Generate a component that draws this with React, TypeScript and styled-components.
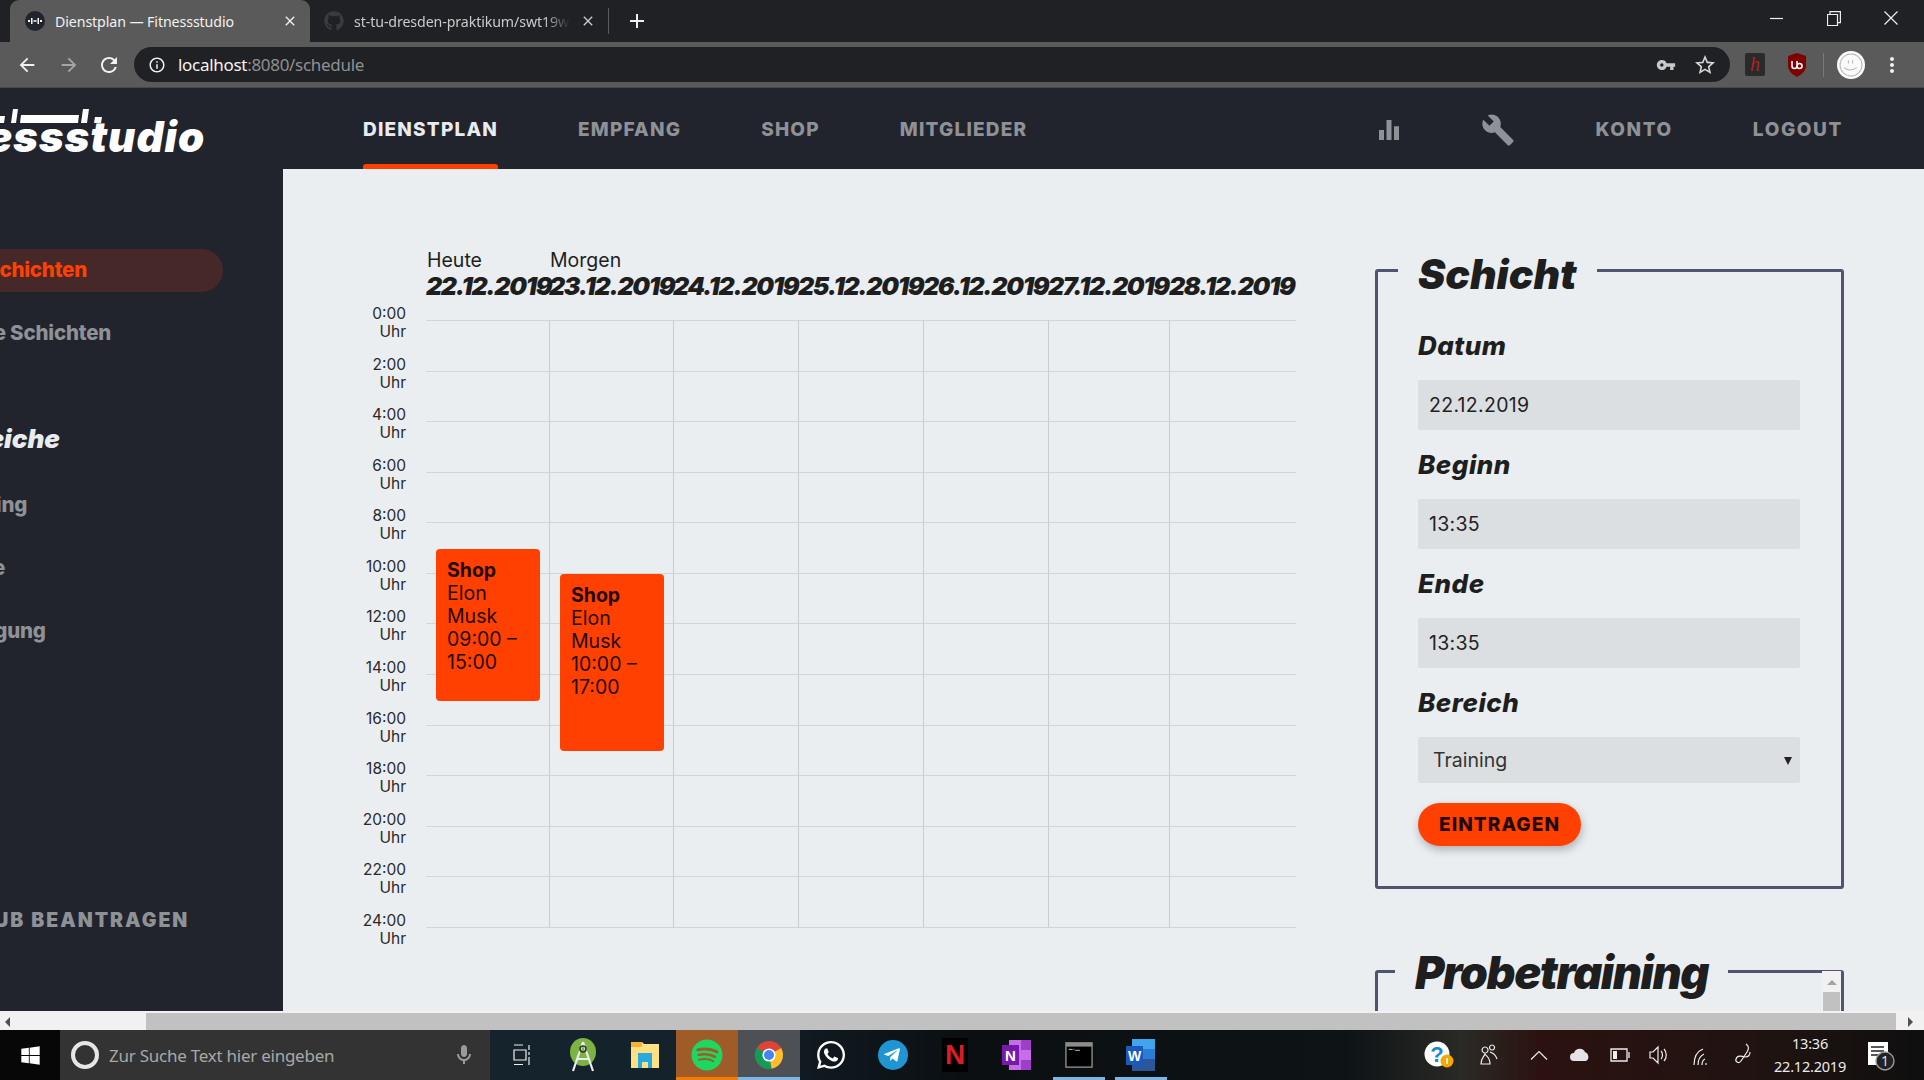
import React from 'react';
import styled, { createGlobalStyle } from 'styled-components';
import { FaGithub, FaWhatsapp, FaTelegramPlane, FaSpotify, FaWindows } from 'react-icons/fa';
import { MdBuild, MdEqualizer, MdVpnKey, MdOutlineStarBorder, MdArrowBack, MdArrowForward, MdRefresh, MdInfoOutline, MdClose, MdAdd, MdMoreVert, MdOutlineMic } from 'react-icons/md';

const HEAD = `Inter, "Liberation Sans", sans-serif`;
const BODY = `Inter, "Open Sans", "Liberation Sans", sans-serif`;
const UI = `"Noto Sans", "Open Sans", sans-serif`;
const ORANGE = '#ff4000';
const DARK = '#21242d';

const GlobalStyle = createGlobalStyle`
  html, body { margin: 0; padding: 0; height: 100%; overflow: hidden; background: ${DARK}; }
  * { box-sizing: border-box; }
`;

const Screen = styled.div`
  width: 1924px;
  height: 1080px;
  display: flex;
  flex-direction: column;
  overflow: hidden;
`;

/* browser */
const TabBar = styled.div`
  height: 42px;
  background: #202124;
  display: flex;
  align-items: flex-end;
  padding-left: 10px;
  flex: none;
  font-family: ${UI};
`;
const Tab = styled.div<{ $active?: boolean }>`
  width: ${p => (p.$active ? 300 : 298)}px;
  height: 42px;
  padding: 0 12px 0 ${p => (p.$active ? 15 : 14)}px;
  border-radius: 9px 9px 0 0;
  background: ${p => (p.$active ? '#5a5a5a' : 'transparent')};
  display: flex;
  align-items: center;
  gap: 10px;
  color: ${p => (p.$active ? '#f1f1f1' : '#c9cacc')};
`;
const TabTitle = styled.span<{ $fade?: boolean }>`
  flex: 1;
  font-size: 14.2px;
  white-space: nowrap;
  overflow: hidden;
  letter-spacing: -0.1px;
  ${p => p.$fade && 'mask-image: linear-gradient(90deg, #000 88%, transparent 100%);'}
`;
const TabDivider = styled.div`
  width: 1px;
  height: 26px;
  margin: 0 0 8px 0;
  background: #5a5b5e;
`;
const NewTab = styled.div`
  display: flex;
  width: 56px;
  height: 42px;
  align-items: center;
  justify-content: center;
  color: #eee;
`;
const WindowButtons = styled.div`
  margin-left: auto;
  margin-right: 5px;
  display: flex;
  height: 42px;
  align-self: flex-start;
`;
const WindowButton = styled.div`
  width: 57px;
  height: 36px;
  display: flex;
  align-items: center;
  justify-content: center;
`;
const Toolbar = styled.div`
  height: 46px;
  flex: none;
  background: #5a5a5a;
  border-bottom: 1px solid #47474a;
  display: flex;
  padding: 5px 0 0 4px;
  align-items: flex-start;
  color: #f1f1f1;
`;
const ToolButton = styled.div<{ $w?: number; $dim?: boolean }>`
  width: ${p => p.$w ?? 40}px;
  height: 35px;
  display: flex;
  align-items: center;
  justify-content: center;
  flex: none;
  color: ${p => (p.$dim ? '#a5a5a5' : '#f1f1f1')};
`;
const Omnibox = styled.div`
  width: 1596px;
  height: 35px;
  margin-left: 5px;
  border-radius: 18px;
  background: #202124;
  display: flex;
  align-items: center;
  padding: 0 8px 0 14px;
  font-family: ${UI};
  font-size: 17px;
  letter-spacing: -0.3px;
`;
const Url = styled.span`
  margin-left: 12px;
  flex: 1;
  color: #8f9092;
  span { color: #f3f3f3; }
`;
const ExtensionSlot = styled(ToolButton)`
  margin-left: 2px;
`;
const ExtDivider = styled.div`
  width: 1px;
  height: 24px;
  margin: 6px 13px 0 7px;
  background: #79797b;
`;
const ExtH = styled.div`
  width: 20px;
  height: 23px;
  background: #2a2a2b;
  border-radius: 2px;
  color: #b3211c;
  font: italic 20px/22px "Liberation Serif", serif;
  text-align: center;
`;
const Avatar = styled.div`
  width: 28px;
  height: 28px;
  margin-top: 4px;
  border-radius: 50%;
  background: #fbfbfb;
  display: flex;
  align-items: center;
  justify-content: center;
`;

/* app */
const AppFrame = styled.div`
  height: 923px;
  flex: none;
  background: ${DARK};
  display: flex;
  flex-direction: column;
  overflow: hidden;
`;
const Header = styled.header`
  height: 81px;
  flex: none;
  display: flex;
  align-items: stretch;
`;
const LogoArea = styled.div`
  width: 283px;
  flex: none;
  overflow: hidden;
  padding-top: 20px;
`;
const Logo = styled.div`
  margin-left: -98px;
  color: #fff;
  font: italic 900 42px/34px ${HEAD};
  letter-spacing: 1px;
  white-space: nowrap;
  svg { display: block; margin: 0 0 -4px 98px; }
`;
const Nav = styled.nav`
  flex: 1;
  display: flex;
  align-items: stretch;
  gap: 80px;
  padding: 0 81px 0 80px;
`;
const NavItem = styled.a<{ $active?: boolean; $push?: boolean; $ls?: number }>`
  position: relative;
  display: flex;
  align-items: center;
  font: 800 19px/1 ${HEAD};
  letter-spacing: ${p => p.$ls ?? 1.2}px;
  color: ${p => (p.$active ? '#e9ecef' : '#8e9196')};
  margin-left: ${p => (p.$push ? 'auto' : 0)};
  padding-top: 2px;
  ${p => p.$active && `
    &::after {
      content: '';
      position: absolute;
      left: 0;
      right: 0;
      bottom: 0;
      height: 5px;
      background: ${ORANGE};
      border-radius: 3px 3px 0 0;
    }
  `}
`;
const StatsItem = styled(NavItem)`
  margin-right: -3px;
`;
const Body = styled.div`
  flex: 1;
  display: flex;
  min-height: 0;
`;
const Sidebar = styled.aside`
  width: 283px;
  flex: none;
  overflow: hidden;
  padding-top: 80px;
  display: flex;
  flex-direction: column;
`;
const SideLink = styled.a<{ $active?: boolean; $top?: number; $left: number }>`
  display: block;
  height: 43px;
  width: 360px;
  margin-left: ${p => p.$left}px;
  margin-top: ${p => p.$top ?? 0}px;
  color: ${p => (p.$active ? ORANGE : '#8e9196')};
  font: 800 20.5px/42px ${HEAD};
  letter-spacing: -0.2px;
  white-space: nowrap;
`;
const ActivePill = styled(SideLink)`
  width: 303px;
  border-radius: 0 22px 22px 0;
  background: #462829;
`;
const SideHeading = styled.h3`
  margin: 62px 0 0 -55px;
  height: 43px;
  color: #e9ecef;
  font: italic 900 26px/43px ${HEAD};
  white-space: nowrap;
`;
const SideAction = styled.a`
  margin: auto 0 79px -67px;
  color: #8e9196;
  font: 900 19.5px/24px ${HEAD};
  letter-spacing: 2px;
  white-space: nowrap;
`;
const Main = styled.main`
  flex: 1;
  min-width: 0;
  background: #eaeef1;
  display: flex;
  align-items: flex-start;
  overflow: hidden;
`;
const Schedule = styled.section`
  width: 1092px;
  flex: none;
  padding: 79px 0 0 143px;
`;
const DayHeadRow = styled.div`
  display: grid;
  grid-template-columns: 123px 124px 125px 125px 125px 121px 127px;
  height: 72px;
`;
const DayHead = styled.div`
  white-space: nowrap;
  color: #1e1e1e;
`;
const DayHint = styled.div`
  height: 23px;
  padding-left: 1px;
  font: 400 19.5px/24px ${BODY};
`;
const DayDate = styled.div`
  font: italic 900 25px/30px ${HEAD};
  letter-spacing: -1.3px;
`;
const ScheduleBody = styled.div`
  display: flex;
  margin-left: -143px;
`;
const TimeColumn = styled.div`
  width: 123px;
  flex: none;
  margin-top: -15px;
  text-align: right;
  color: #2a2a2a;
  font: 400 15.5px/18px ${BODY};
`;
const TimeLabel = styled.div`
  height: 50.58px;
  white-space: pre-line;
`;
const GridWrap = styled.div`
  position: relative;
  margin-left: 20px;
  width: 870px;
`;
const GridTable = styled.div`
  display: grid;
  grid-template-columns: 123px 124px 125px 125px 125px 121px 127px;
  grid-auto-rows: 50.58px;
  border-bottom: 1px solid #d2d6d9;
`;
const GridCell = styled.div<{ $first: boolean }>`
  border-top: 1px solid #d2d6d9;
  border-left: ${p => (p.$first ? 'none' : '1px solid #c9cdd0')};
`;
const EventCard = styled.div<{ $x: number; $y: number; $h: number }>`
  position: absolute;
  left: ${p => p.$x}px;
  top: ${p => p.$y}px;
  width: 104px;
  height: ${p => p.$h}px;
  background: ${ORANGE};
  border-radius: 4px;
  padding: 10px 11px;
  color: #1f0a02;
  font: 400 19.5px/23px ${BODY};
  b { font-weight: 700; display: block; }
`;
const Panel = styled.aside`
  width: 469px;
  flex: none;
  padding-top: 70px;
`;
const Box = styled.fieldset<{ $h?: number }>`
  position: relative;
  margin: 0;
  padding: 0 40px;
  border: 3px solid #4f5570;
  border-radius: 3px;
  min-width: 0;
  ${p => p.$h && `height: ${p.$h}px;`}
`;
const Legend = styled.legend<{ $size: number; $ml: number; $ls?: number; $drop: number }>`
  margin-left: ${p => p.$ml}px;
  padding: ${p => p.$drop}px 20px 0;
  color: #1e1e1e;
  font: italic 900 ${p => p.$size}px/56px ${HEAD};
  letter-spacing: ${p => p.$ls ?? 0}px;
  white-space: nowrap;
`;
const FieldLabel = styled.label<{ $first?: boolean }>`
  display: block;
  height: 36px;
  margin-top: ${p => (p.$first ? 25 : 0)}px;
  margin-bottom: 17px;
  color: #1e1e1e;
  font: italic 800 26px/38px ${HEAD};
  letter-spacing: 0.5px;
`;
const TextField = styled.input`
  display: block;
  width: 382px;
  height: 50px;
  margin-bottom: 16px;
  border: none;
  border-radius: 2px;
  background: #dcdfe2;
  padding: 0 11px;
  color: #222;
  font: 400 19.5px/50px ${BODY};
  letter-spacing: 0.3px;
`;
const SelectWrap = styled.div`
  position: relative;
  width: 382px;
  height: 46px;
`;
const SelectField = styled.select`
  display: block;
  width: 100%;
  height: 46px;
  appearance: none;
  border: none;
  border-radius: 2px;
  background: #dcdfe2;
  padding: 0 15px;
  color: #333;
  font: 400 19.5px/46px ${BODY};
`;
const SelectArrow = styled.span`
  position: absolute;
  right: 8px;
  top: 20px;
  width: 0;
  height: 0;
  border-left: 4px solid transparent;
  border-right: 4px solid transparent;
  border-top: 8px solid #222;
`;
const SubmitButton = styled.button`
  display: block;
  width: 163px;
  height: 43px;
  margin: 20px 0 40px;
  border: none;
  border-radius: 22px;
  background: ${ORANGE};
  box-shadow: 1px 4px 8px rgba(0, 0, 0, 0.25);
  color: #1f0a02;
  font: 800 19px/43px ${HEAD};
  letter-spacing: 1.1px;
  text-align: center;
  padding: 0;
`;
const Spacer = styled.div`
  height: 53px;
`;
const InnerScroll = styled.div`
  position: absolute;
  right: 0;
  top: -30px;
  width: 19px;
  height: 80px;
  background: #f1f1f1;
  display: flex;
  flex-direction: column;
  align-items: center;
  padding-top: 9px;
`;
const InnerArrow = styled.div`
  width: 0;
  height: 0;
  border-left: 5px solid transparent;
  border-right: 5px solid transparent;
  border-bottom: 5px solid #a3a3a3;
`;
const InnerThumb = styled.div`
  width: 17px;
  height: 50px;
  margin-top: 7px;
  background: #c1c1c1;
`;

/* page scrollbar */
const HScroll = styled.div`
  height: 19px;
  flex: none;
  background: #f1f1f1;
  padding-top: 2px;
  display: flex;
  align-items: stretch;
`;
const HScrollEnd = styled.div<{ $w: number; $right?: boolean }>`
  width: ${p => p.$w}px;
  flex: none;
  display: flex;
  align-items: center;
  justify-content: ${p => (p.$right ? 'center' : 'flex-start')};
  padding-left: ${p => (p.$right ? 0 : 5)}px;
`;
const HArrow = styled.div<{ $right?: boolean }>`
  width: 0;
  height: 0;
  border-top: 5px solid transparent;
  border-bottom: 5px solid transparent;
  ${p => (p.$right ? 'border-left: 5px solid #505050;' : 'border-right: 5px solid #505050;')}
`;
const HThumb = styled.div`
  flex: 1;
  background: #c1c1c1;
`;

/* taskbar */
const Taskbar = styled.div`
  height: 50px;
  flex: none;
  display: flex;
  align-items: stretch;
  background: linear-gradient(90deg, #0a0a0a 0, #15242c 25%, #14232b 35%, #0b0f12 50%, #0e1316 70%, #2a2a26 76%, #2b1210 80%, #1f1311 92%, #0f0f0f 100%);
  font-family: ${UI};
`;
const StartButton = styled.div`
  width: 60px;
  flex: none;
  display: flex;
  align-items: center;
  justify-content: center;
  color: #fff;
  background: #070707;
`;
const SearchBox = styled.div`
  width: 430px;
  flex: none;
  display: flex;
  align-items: center;
  padding: 0 14px 0 9px;
  gap: 10px;
  background: #333;
  color: #a8a8a8;
  font-size: 17px;
  letter-spacing: -0.25px;
`;
const CortanaRing = styled.div`
  width: 28px;
  height: 28px;
  margin-left: 2px;
  border: 4px solid #e6e6e6;
  border-radius: 50%;
  flex: none;
`;
const SearchText = styled.span`
  flex: 1;
`;
const TaskIcon = styled.div<{ $bg?: string; $line?: string; $inset?: number }>`
  position: relative;
  width: 62px;
  flex: none;
  display: flex;
  align-items: center;
  justify-content: center;
  background: ${p => p.$bg ?? 'transparent'};
  ${p => p.$line && `
    &::after {
      content: '';
      position: absolute;
      bottom: 0;
      left: ${p.$inset ?? 0}px;
      right: ${p.$inset ?? 0}px;
      height: 3px;
      background: ${p.$line};
    }
  `}
`;
const NetflixTile = styled.div`
  width: 26px;
  height: 34px;
  background: #000;
  color: #d81f26;
  font: 700 28px/34px "Liberation Sans", sans-serif;
  text-align: center;
`;
const Tray = styled.div`
  margin-left: auto;
  padding-right: 20px;
  display: flex;
  align-items: center;
  color: #fff;
`;
const TrayIcon = styled.div<{ $w: number }>`
  width: ${p => p.$w}px;
  display: flex;
  align-items: center;
  justify-content: center;
`;
const Clock = styled.div`
  width: 92px;
  margin-left: 6px;
  text-align: center;
  color: #ececec;
  font-size: 14.5px;
  line-height: 23px;
  letter-spacing: -0.2px;
`;

const DAYS: Array<[string, string]> = [
  ['Heute', '22.12.2019'],
  ['Morgen', '23.12.2019'],
  ['', '24.12.2019'],
  ['', '25.12.2019'],
  ['', '26.12.2019'],
  ['', '27.12.2019'],
  ['', '28.12.2019'],
];
const HOURS = Array.from({ length: 13 }, (_, i) => `${i * 2}:00\nUhr`);
const CELLS = Array.from({ length: 84 }, (_, i) => i);

const Dumbbell = ({ size }: { size: number }) => (
  <svg width={size} height={size} viewBox="0 0 20 20">
    <circle cx="10" cy="10" r="10" fill="#21242d" />
    <path d="M3 9h2v2H3zM6 7h1.5v6H6zM8.5 9.3h3v1.4h-3zM12.5 7H14v6h-1.5zM15 9h2v2h-2z" fill="#fff" />
  </svg>
);

const LogoMark = () => (
  <svg width="110" height="16" viewBox="0 0 110 16">
    <path d="M0 8h5l-1 7H-1zM13 1h5l-2 14h-5zM21 7h58l-1 8H20zM83 1h6l-2 14h-6zM95 9h7l-1 6h-7z" fill="#fff" />
  </svg>
);

const ChromeIcon = () => (
  <svg width="30" height="30" viewBox="0 0 30 30">
    <circle cx="15" cy="15" r="14" fill="#db4437" />
    <path d="M15 15 27.1 8a14 14 0 0 1-9.6 20.8z" fill="#fbc02d" />
    <path d="M15 15 17.5 28.8A14 14 0 0 1 2.9 8z" fill="#0f9d58" />
    <circle cx="15" cy="15" r="6.6" fill="#fff" />
    <circle cx="15" cy="15" r="5" fill="#4285f4" />
  </svg>
);
const AndroidIcon = () => (
  <svg width="30" height="36" viewBox="0 0 30 36">
    <ellipse cx="15" cy="15" rx="13" ry="14" fill="#7cb342" />
    <path d="M15 5 5 34M15 5l10 29M8 22h14" stroke="#e8eef0" strokeWidth="2.2" fill="none" />
    <circle cx="15" cy="12" r="3" fill="none" stroke="#2e3b2b" strokeWidth="1.6" />
  </svg>
);
const FolderIcon = () => (
  <svg width="30" height="30" viewBox="0 0 30 30">
    <path d="M1 2h11l2 2h15v24H1z" fill="#ffe082" />
    <path d="M1 2h11v5H1z" fill="#f9b233" />
    <path d="M8 13h14v15h-4v-6h-6v6H8z" fill="#29a9e1" />
  </svg>
);
const OneNoteIcon = () => (
  <svg width="32" height="32" viewBox="0 0 32 32">
    <path d="M8 1h22v30H8z" fill="#c56ee8" />
    <path d="M20 1h10v10H20zM20 21h10v10H20z" fill="#9f3fc9" />
    <path d="M1 6h17v20H1z" fill="#7719aa" />
    <text x="9.5" y="22" fill="#fff" fontSize="15" fontWeight="700" textAnchor="middle" fontFamily="Liberation Sans">N</text>
  </svg>
);
const TerminalIcon = () => (
  <svg width="28" height="28" viewBox="0 0 30 30">
    <rect x="1" y="2" width="28" height="26" fill="#000" stroke="#8c8c8c" strokeWidth="1.5" />
    <rect x="1" y="2" width="28" height="4" fill="#8c8c8c" />
    <path d="M4 9h4M9 9h1M11 10h5" stroke="#ccc" strokeWidth="1" />
  </svg>
);
const WordIcon = () => (
  <svg width="32" height="34" viewBox="0 0 32 34">
    <path d="M7 1h23v32H7z" fill="#2b579a" />
    <path d="M7 1h23v10H7z" fill="#41a5ee" />
    <path d="M7 11h23v10H7z" fill="#2b7cd3" />
    <path d="M1 8h17v19H1z" fill="#185abd" />
    <text x="9.5" y="23" fill="#fff" fontSize="14" fontWeight="700" textAnchor="middle" fontFamily="Liberation Sans">W</text>
  </svg>
);
const HelpIcon = () => (
  <svg width="30" height="30" viewBox="0 0 30 30">
    <circle cx="13" cy="14" r="12.5" fill="#fff" />
    <text x="13" y="22" fill="#1787cf" fontSize="22" fontWeight="700" textAnchor="middle" fontFamily="Liberation Sans">?</text>
    <circle cx="23" cy="21" r="6.5" fill="#f7a600" />
    <path d="M23 18v6" stroke="#fff" strokeWidth="1.6" />
  </svg>
);
const Stroke = ({ w, h, d }: { w: number; h: number; d: string }) => (
  <svg width={w} height={h} viewBox={`0 0 ${w} ${h}`} fill="none" stroke="#eee" strokeWidth="1.2">
    <path d={d} />
  </svg>
);

const App = () => (
  <Screen>
    <GlobalStyle />
    <TabBar>
      <Tab $active>
        <Dumbbell size={20} />
        <TabTitle>Dienstplan — Fitnessstudio</TabTitle>
        <MdClose size={16} />
      </Tab>
      <Tab>
        <FaGithub size={20} color="#3a3b3e" />
        <TabTitle $fade>st-tu-dresden-praktikum/swt19w</TabTitle>
        <MdClose size={16} />
      </Tab>
      <TabDivider />
      <NewTab><MdAdd size={24} /></NewTab>
      <WindowButtons>
        <WindowButton><Stroke w={13} h={13} d="M0 6.5h13" /></WindowButton>
        <WindowButton><Stroke w={14} h={15} d="M.5 3.5h10v11H.5zM3 3.5V.6h10.4v11h-3" /></WindowButton>
        <WindowButton><Stroke w={14} h={14} d="M.5.5l13 13M13.5.5l-13 13" /></WindowButton>
      </WindowButtons>
    </TabBar>
    <Toolbar>
      <ToolButton $w={45}><MdArrowBack size={22} /></ToolButton>
      <ToolButton $dim><MdArrowForward size={22} /></ToolButton>
      <ToolButton $w={40}><MdRefresh size={24} /></ToolButton>
      <Omnibox>
        <MdInfoOutline size={18} />
        <Url><span>localhost</span>:8080/schedule</Url>
        <ToolButton $w={44}><MdVpnKey size={20} color="#c8c8c8" /></ToolButton>
        <ToolButton $w={34}><MdOutlineStarBorder size={24} color="#d8d8d8" /></ToolButton>
      </Omnibox>
      <ExtensionSlot $w={46}><ExtH>h</ExtH></ExtensionSlot>
      <ToolButton $w={38}>
        <svg width="20" height="24" viewBox="0 0 20 24">
          <path d="M10 0 19 3v9c0 6-4 9-9 12C5 21 1 18 1 12V3z" fill="#800000" />
          <path d="M5 8v5a2.5 2.5 0 0 0 5 0V8M10 13a2.5 2.5 0 1 0 5 0 2.5 2.5 0 1 0-5 0" stroke="#fff" strokeWidth="1.6" fill="none" />
        </svg>
      </ToolButton>
      <ExtDivider />
      <Avatar>
        <svg width="24" height="24" viewBox="0 0 23 23" fill="none" stroke="#b5b5b5" strokeWidth="1">
          <circle cx="11.5" cy="11.5" r="10.5" />
          <path d="M9 7v3M13 7v3M5 14c3 3 8 3 12 0" />
        </svg>
      </Avatar>
      <ToolButton $w={53}><MdMoreVert size={24} /></ToolButton>
    </Toolbar>

    <AppFrame>
      <Header>
        <LogoArea>
          <Logo><LogoMark />Fitnessstudio</Logo>
        </LogoArea>
        <Nav>
          <NavItem $active>DIENSTPLAN</NavItem>
          <NavItem>EMPFANG</NavItem>
          <NavItem>SHOP</NavItem>
          <NavItem>MITGLIEDER</NavItem>
          <StatsItem $push><MdEqualizer size={30} /></StatsItem>
          <NavItem><MdBuild size={34} /></NavItem>
          <NavItem $ls={1.6}>KONTO</NavItem>
          <NavItem $ls={1.6}>LOGOUT</NavItem>
        </Nav>
      </Header>
      <Body>
        <Sidebar>
          <ActivePill $active $left={-80}>Meine Schichten</ActivePill>
          <SideLink $top={20} $left={-62}>Offene Schichten</SideLink>
          <SideHeading>Bereiche</SideHeading>
          <SideLink $top={24} $left={-55}>Training</SideLink>
          <SideLink $top={20} $left={-57}>Theke</SideLink>
          <SideLink $top={20} $left={-55}>Reinigung</SideLink>
          <SideAction>URLAUB BEANTRAGEN</SideAction>
        </Sidebar>
        <Main>
          <Schedule>
            <DayHeadRow>
              {DAYS.map(([hint, date]) => (
                <DayHead key={date}>
                  <DayHint>{hint}</DayHint>
                  <DayDate>{date}</DayDate>
                </DayHead>
              ))}
            </DayHeadRow>
            <ScheduleBody>
              <TimeColumn>
                {HOURS.map(h => <TimeLabel key={h}>{h}</TimeLabel>)}
              </TimeColumn>
              <GridWrap>
                <GridTable>
                  {CELLS.map(i => <GridCell key={i} $first={i % 7 === 0} />)}
                </GridTable>
                <EventCard $x={10} $y={229} $h={152}>
                  <b>Shop</b>Elon<br />Musk<br />09:00 –<br />15:00
                </EventCard>
                <EventCard $x={134} $y={254} $h={177}>
                  <b>Shop</b>Elon<br />Musk<br />10:00 –<br />17:00
                </EventCard>
              </GridWrap>
            </ScheduleBody>
          </Schedule>
          <Panel>
            <Box>
              <Legend $size={41} $ml={-20} $drop={7}>Schicht</Legend>
              <FieldLabel $first>Datum</FieldLabel>
              <TextField readOnly value="22.12.2019" />
              <FieldLabel>Beginn</FieldLabel>
              <TextField readOnly value="13:35" />
              <FieldLabel>Ende</FieldLabel>
              <TextField readOnly value="13:35" />
              <FieldLabel>Bereich</FieldLabel>
              <SelectWrap>
                <SelectField defaultValue="Training">
                  <option>Training</option>
                </SelectField>
                <SelectArrow />
              </SelectWrap>
              <SubmitButton>EINTRAGEN</SubmitButton>
            </Box>
            <Spacer />
            <Box $h={200}>
              <Legend $size={45} $ml={-23} $ls={-1.4} $drop={3}>Probetraining</Legend>
              <InnerScroll>
                <InnerArrow />
                <InnerThumb />
              </InnerScroll>
            </Box>
          </Panel>
        </Main>
      </Body>
    </AppFrame>

    <HScroll>
      <HScrollEnd $w={146}><HArrow /></HScrollEnd>
      <HThumb />
      <HScrollEnd $w={28} $right><HArrow $right /></HScrollEnd>
    </HScroll>

    <Taskbar>
      <StartButton><FaWindows size={21} /></StartButton>
      <SearchBox>
        <CortanaRing />
        <SearchText>Zur Suche Text hier eingeben</SearchText>
        <MdOutlineMic size={24} color="#9a9a9a" />
      </SearchBox>
      <TaskIcon><Stroke w={20} h={22} d="M3 1h9M3 6h12v10H3zM3 20.5h9M18 1v5M18 8v3M18 13v8" /></TaskIcon>
      <TaskIcon><AndroidIcon /></TaskIcon>
      <TaskIcon><FolderIcon /></TaskIcon>
      <TaskIcon $bg="#a05c28" $line="#f57c00"><FaSpotify size={32} color="#1ed760" /></TaskIcon>
      <TaskIcon $bg="#4d5055" $line="#7ab6e6"><ChromeIcon /></TaskIcon>
      <TaskIcon><FaWhatsapp size={32} color="#fff" /></TaskIcon>
      <TaskIcon><svg width="30" height="30" viewBox="0 0 30 30"><circle cx="15" cy="15" r="15" fill="#1f96d3" /><foreignObject x="5" y="6" width="18" height="18"><FaTelegramPlane size={18} color="#fff" /></foreignObject></svg></TaskIcon>
      <TaskIcon><NetflixTile>N</NetflixTile></TaskIcon>
      <TaskIcon><OneNoteIcon /></TaskIcon>
      <TaskIcon $line="#7ab6e6" $inset={5}><TerminalIcon /></TaskIcon>
      <TaskIcon $line="#7ab6e6" $inset={5}><WordIcon /></TaskIcon>
      <Tray>
        <TrayIcon $w={50}><HelpIcon /></TrayIcon>
        <TrayIcon $w={50}><Stroke w={20} h={22} d="M6 9a3 3 0 1 1 .1 0zM2 20c0-6 3-7 4-10 2 3 5 3 5 10zM13 6a2.5 2.5 0 1 1 .1 0zM11 8c2 1 5 1 7 7" /></TrayIcon>
        <TrayIcon $w={50}><Stroke w={18} h={10} d="M1 9.5l8-8 8 8" /></TrayIcon>
        <TrayIcon $w={32}>
          <svg width="20" height="14" viewBox="0 0 20 14"><path d="M4 13a4 4 0 0 1 0-8 6 6 0 0 1 11-1 5 5 0 0 1 1 9z" fill="#e4e4e4" /></svg>
        </TrayIcon>
        <TrayIcon $w={48}><svg width="20" height="14" viewBox="0 0 20 14" fill="none" stroke="#eee" strokeWidth="1.3"><path d="M1 1h16v12H1zM19 4v6" /><path d="M3 3h4v8H3z" fill="#eee" stroke="none" /></svg></TrayIcon>
        <TrayIcon $w={30}><Stroke w={20} h={20} d="M1 7h3l5-5v16l-5-5H1zM12 6c2 2 2 6 0 8M15 4c3 3 3 9 0 12" /></TrayIcon>
        <TrayIcon $w={54}><Stroke w={20} h={22} d="M3 21c0-9 4-14 9-16M7 21c0-6 2-9 6-11M11 21c0-3 1-5 3-6M15 19v2" /></TrayIcon>
        <TrayIcon $w={30}><Stroke w={18} h={24} d="M12 1c3 2 3 5 1 8l-6 9c-2 3-6 1-5-2 1-4 6-3 9-2 3 0 5-2 5-5" /></TrayIcon>
        <Clock>13:36<br />22.12.2019</Clock>
        <TrayIcon $w={48}>
          <svg width="32" height="32" viewBox="0 0 32 32">
            <path d="M4 3h20v23H4z" fill="#fff" />
            <path d="M7 8h13M7 12h13M7 16h13" stroke="#222" strokeWidth="1.4" />
            <circle cx="21" cy="22" r="9" fill="#222" stroke="#999" strokeWidth="1.4" />
            <text x="21" y="27" fill="#ddd" fontSize="14" textAnchor="middle" fontFamily="Noto Sans">1</text>
          </svg>
        </TrayIcon>
      </Tray>
    </Taskbar>
  </Screen>
);

export default App;
